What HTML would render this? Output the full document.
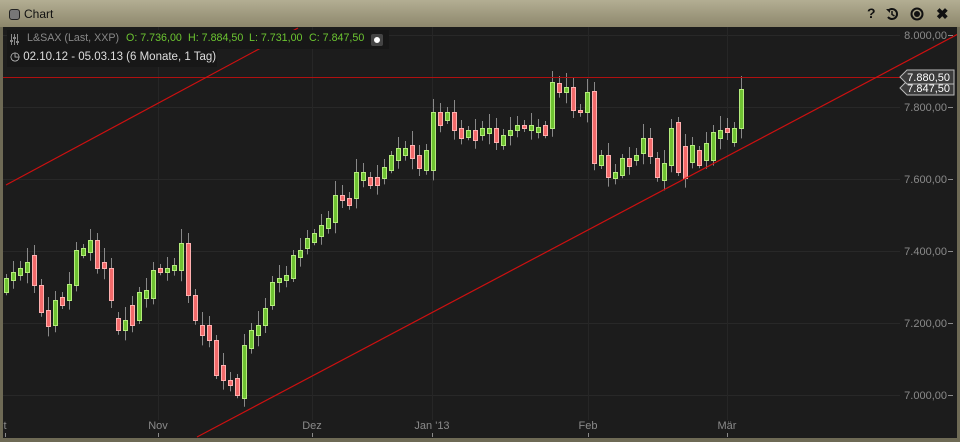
<!DOCTYPE html>
<html><head><meta charset="utf-8"><style>
body{margin:0;width:960px;height:442px;overflow:hidden;background:#6e6a55;font-family:"Liberation Sans",sans-serif}
#frame{position:absolute;left:0;top:0;width:960px;height:442px;background:#6e6a55}
#title{position:absolute;left:0;top:0;width:960px;height:27px;background:linear-gradient(#b3ae93,#8d876c)}
#chart{position:absolute;left:3px;top:27px;width:954px;height:411px;background:#1c1c1c;overflow:hidden}
.t{position:absolute;font-size:11px;white-space:nowrap}
.g{color:#6cc531;font-size:10.7px}
</style></head><body>
<div id="frame"></div>
<div id="title">
 <div style="position:absolute;left:9px;top:9px;width:9px;height:9px;border:1px solid #222;border-radius:3px;background:#777"></div>
 <div class="t" style="left:24px;top:7px;color:#111;font-size:12px">Chart</div>
 <div class="t" style="left:867px;top:5px;color:#111;font-size:14px;font-weight:bold">?</div>
 <svg style="position:absolute;left:885px;top:7px" width="14" height="14" viewBox="0 0 14 14"><path d="M3 4 A5 5 0 1 1 3 10" fill="none" stroke="#111" stroke-width="2"/><path d="M1 2 L5 2 L5 6Z" fill="#111"/><path d="M7 4V7.5L9.5 9" stroke="#111" stroke-width="1.5" fill="none"/></svg>
 <svg style="position:absolute;left:910px;top:7px" width="14" height="14"><circle cx="7" cy="7" r="5.5" fill="none" stroke="#111" stroke-width="2"/><circle cx="7" cy="7" r="3" fill="#111"/></svg>
 <div class="t" style="left:936px;top:5px;color:#111;font-size:15px;font-weight:bold">✖</div>
</div>
<div id="chart">
<svg id="s" width="954" height="411" style="position:absolute;left:0;top:0"></svg>
<div style="position:absolute;left:4px;top:3px;width:382px;height:19px;background:#171717"></div>
<div style="position:absolute;left:4px;top:22px;width:210px;height:18px;background:#171717"></div>
<svg style="position:absolute;left:7px;top:7px" width="9" height="11"><path d="M1.5 0V11M4.5 0V11M7.5 0V11" stroke="#888"/><rect x="0" y="6" width="3" height="2" fill="#888"/><rect x="3" y="3" width="3" height="2" fill="#888"/><rect x="6" y="7" width="3" height="2" fill="#888"/></svg>
<div class="t" style="left:24px;top:5px;color:#888;font-size:10.7px">L&amp;SAX (Last, XXP)</div>
<div class="t g" style="left:123px;top:5px">O: 7.736,00</div>
<div class="t g" style="left:185px;top:5px">H: 7.884,50</div>
<div class="t g" style="left:246px;top:5px">L: 7.731,00</div>
<div class="t g" style="left:306px;top:5px">C: 7.847,50</div>
<div style="position:absolute;left:368px;top:7px;width:12px;height:12px;background:#444;border-radius:2px"><div style="margin:3px;width:4px;height:4px;border:1px solid #fff;border-radius:50%;background:#fff"></div></div>
<div class="t" style="left:7px;top:22px;color:#ddd;font-size:11.5px">◷ 02.10.12 - 05.03.13 (6 Monate, 1 Tag)</div>
</div>
<script>
var s=document.getElementById('s'),h='';
var ox=-3,oy=-27;
function L(x1,y1,x2,y2,c,w){h+='<line x1="'+(x1+ox)+'" y1="'+(y1+oy)+'" x2="'+(x2+ox)+'" y2="'+(y2+oy)+'" stroke="'+c+'" stroke-width="'+(w||1)+'"/>';}
[35,107,179,251,323,395].forEach(function(y){L(3,y+.5,900,y+.5,'#282828');});
[158,312,432,588,727].forEach(function(x){L(x+.5,27,x+.5,420,'#262626');});
var d=[[6,278,292,'g'],[13,272,280,'g'],[20,268,275,'g'],[27,262,272,'g'],[34,255,285,'r'],[41,285,312,'r'],[48,310,326,'r'],[55,300,325,'g'],[62,297,305,'r'],[69,284,300,'g'],[76,250,285,'g'],[83,248,255,'g'],[90,240,252,'g'],[97,240,268,'r'],[104,262,268,'r'],[111,268,300,'r'],[118,318,330,'r'],[125,320,330,'g'],[132,305,325,'r'],[139,292,320,'g'],[146,290,298,'g'],[153,270,298,'g'],[160,268,272,'r'],[167,268,272,'g'],[174,265,270,'g'],[181,243,270,'g'],[188,243,295,'r'],[195,295,320,'r'],[202,325,335,'r'],[209,325,340,'r'],[216,340,375,'r'],[223,365,380,'r'],[230,380,385,'r'],[237,378,395,'r'],[244,345,398,'g'],[251,330,348,'g'],[258,325,335,'g'],[265,308,325,'g'],[272,282,305,'g'],[279,278,282,'g'],[286,275,280,'g'],[293,255,278,'g'],[300,250,257,'g'],[307,238,248,'g'],[314,233,242,'g'],[321,225,236,'g'],[328,218,228,'g'],[335,195,222,'g'],[342,195,200,'r'],[349,198,205,'r'],[356,172,198,'g'],[363,172,180,'g'],[370,177,185,'r'],[377,177,185,'r'],[384,167,178,'g'],[391,155,170,'g'],[398,148,160,'g'],[405,148,155,'g'],[412,145,158,'r'],[419,155,168,'r'],[426,150,170,'g'],[433,112,170,'g'],[440,112,125,'r'],[447,112,120,'g'],[454,112,130,'r'],[461,128,138,'r'],[468,130,137,'g'],[475,130,140,'r'],[482,128,135,'g'],[489,128,133,'g'],[496,128,142,'r'],[503,135,145,'g'],[510,130,135,'g'],[517,125,130,'g'],[524,125,128,'r'],[531,125,130,'g'],[538,127,132,'g'],[545,125,135,'r'],[552,82,128,'g'],[559,83,92,'r'],[566,87,92,'g'],[573,87,110,'r'],[580,110,112,'r'],[587,92,112,'g'],[594,91,163,'r'],[601,155,165,'g'],[608,155,177,'r'],[615,172,178,'g'],[622,158,175,'g'],[629,158,166,'r'],[636,155,160,'g'],[643,138,153,'g'],[650,138,156,'r'],[657,158,177,'r'],[664,163,180,'g'],[671,128,165,'g'],[678,122,172,'r'],[685,146,178,'r'],[692,145,162,'g'],[699,150,165,'r'],[706,143,160,'g'],[713,132,160,'g'],[720,130,138,'g'],[727,128,132,'r'],[734,128,142,'g'],[741,89,128,'g']];
d.forEach(function(c,i){var w=4+((i*7)%11);L(c[0]+.5,c[1]-w,c[0]+.5,c[2]+w*0.8,'#888');});
d.forEach(function(c){var g=c[3]=='g';h+='<rect x="'+(c[0]-1.5+ox)+'" y="'+(c[1]+oy+.5)+'" width="4" height="'+Math.max(2,c[2]-c[1])+'" fill="'+(g?'#6fc232':'#f26a6a')+'" stroke="'+(g?'#b4ec7c':'#ffb0b0')+'" stroke-width="1"/>';});
L(3,77.5,905,77.5,'#b01010');
L(6,185,298,28,'#cc1010',1.2);
L(197,437,960,33,'#cc1010',1.2);
[[35,'8.000,00'],[107,'7.800,00'],[179,'7.600,00'],[251,'7.400,00'],[323,'7.200,00'],[395,'7.000,00']].forEach(function(a){h+='<text x="'+(947+ox)+'" y="'+(a[0]+4+oy)+'" fill="#8a8a8a" font-size="11" text-anchor="end" font-family="Liberation Sans">'+a[1]+'</text>';L(948,a[0]+.5,953,a[0]+.5,'#8a8a8a');});
[[88,'7.847,50'],[77,'7.880,50']].forEach(function(a){var y=a[0]+oy;h+='<path d="M'+(900+ox)+' '+y+' L'+(907+ox)+' '+(y-7)+' L'+(954+ox)+' '+(y-7)+' L'+(954+ox)+' '+(y+7)+' L'+(907+ox)+' '+(y+7)+'Z" fill="#3c3c3c" stroke="#bbb"/><text x="'+(950+ox)+'" y="'+(y+4)+'" fill="#fff" font-size="11" text-anchor="end" font-family="Liberation Sans">'+a[1]+'</text>';});
[[5,'t'],[158,'Nov'],[312,'Dez'],[432,'Jan \'13'],[588,'Feb'],[727,'Mär']].forEach(function(a){h+='<text x="'+(a[0]+ox)+'" y="'+(429+oy)+'" fill="#8a8a8a" font-size="11" text-anchor="middle" font-family="Liberation Sans">'+a[1]+'</text>';L(a[0]+.5,433,a[0]+.5,437,'#8a8a8a');});
s.innerHTML=h;
</script>
</body></html>
